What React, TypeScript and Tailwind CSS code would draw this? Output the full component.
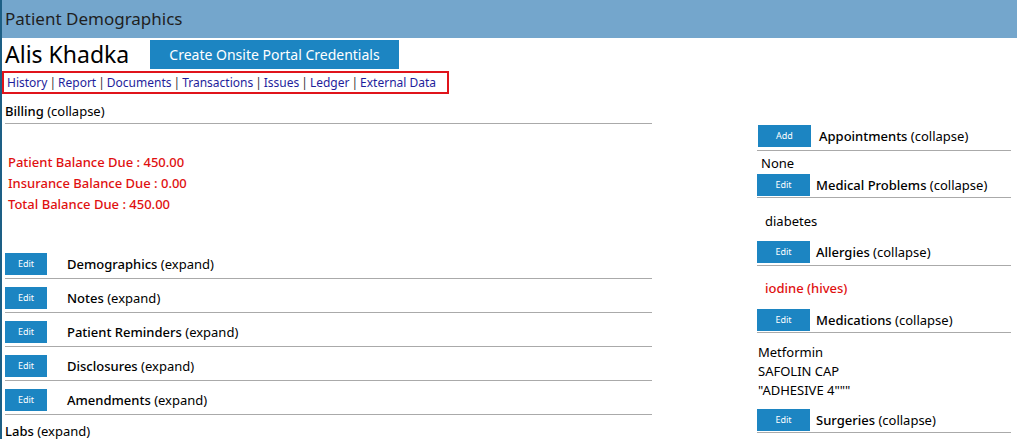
import React from 'react'

const font = "font-['Noto_Sans','Open_Sans',sans-serif]"

const EditBtn = ({ label = 'Edit', w = 'w-[42px]' }: { label?: string; w?: string }) => (
  <div className={`${w} h-[22px] bg-[#1c85c2] text-white text-[9px] flex items-center justify-center shrink-0`}>
    {label}
  </div>
)

const Title = ({ name, state }: { name: string; state: string }) => (
  <span className="text-[13px] text-black leading-[18px] whitespace-nowrap">
    <span className="font-medium">{name}</span> <span className="font-normal">({state})</span>
  </span>
)

const links = ['History', 'Report', 'Documents', 'Transactions', 'Issues', 'Ledger', 'External Data']

const leftRows = ['Demographics', 'Notes', 'Patient Reminders', 'Disclosures', 'Amendments']

export default function App() {
  return (
    <div className={`${font} w-[1017px] h-[439px] overflow-hidden bg-white border-l-2 border-[#1d5f85] text-[#222]`}>
      <div className="h-[38px] bg-[#74a6cc] flex items-center pl-[3px] text-[17px] text-[#1f1f1f]">
        Patient Demographics
      </div>

      <div className="flex items-center h-[33px] pl-[3px]">
        <span className="text-[23px] text-black leading-none w-[145px]">Alis Khadka</span>
        <div className="h-[29px] w-[249px] bg-[#1c85c2] text-white text-[14px] flex items-center justify-center">
          Create Onsite Portal Credentials
        </div>
      </div>

      <div className="w-[447px] h-[23px] border-2 border-[#e0141b] flex items-center pl-[3px] text-[12px] text-[#1e1e9c] whitespace-nowrap">
        {links.map((l, i) => (
          <React.Fragment key={l}>
            {i > 0 && <span className="text-[#333] px-[2px]">|</span>}
            <span>{l}</span>
          </React.Fragment>
        ))}
      </div>

      <div className="flex">
        <div className="w-[650px] pl-[3px]">
          <div className="pt-[8px] pb-[3px] border-b border-[#aaa] text-[13px] leading-[18px] text-black">
            <span className="font-medium">Billing</span> (collapse)
          </div>
          <div className="mt-[28px] pl-[3px] text-[13px] leading-[21px] text-[#e01010] font-medium">
            <div>Patient Balance Due : 450.00</div>
            <div>Insurance Balance Due : 0.00</div>
            <div>Total Balance Due : 450.00</div>
          </div>
          <div className="mt-[30px]">
            {leftRows.map((r) => (
              <div key={r} className="flex items-center gap-[20px] pt-[8px] pb-[3px] border-b border-[#aaa]">
                <EditBtn />
                <Title name={r} state="expand" />
              </div>
            ))}
          </div>
          <div className="mt-[7px] text-[13px] leading-[18px] text-black">
            <span className="font-medium">Labs</span> (expand)
          </div>
        </div>

        <div className="ml-[105px] w-[254px] text-[13px]">
          <div className="mt-[31px] flex items-center gap-[8px] pb-[3px] border-b border-[#aaa]">
            <div className="ml-[1px]">
              <EditBtn label="Add" w="w-[53px]" />
            </div>
            <Title name="Appointments" state="collapse" />
          </div>
          <div className="mt-[3px] pl-[4px] leading-[18px] text-black">None</div>
          <div className="mt-[2px] flex items-center gap-[6px] pb-[1px] border-b border-[#aaa]">
            <EditBtn w="w-[53px]" />
            <Title name="Medical Problems" state="collapse" />
          </div>
          <div className="mt-[14px] pl-[8px] leading-[18px] text-black">diabetes</div>
          <div className="mt-[11px] flex items-center gap-[6px] pb-[2px] border-b border-[#aaa]">
            <EditBtn w="w-[53px]" />
            <Title name="Allergies" state="collapse" />
          </div>
          <div className="mt-[13px] pl-[8px] leading-[18px] text-[#e01010] font-medium">iodine (hives)</div>
          <div className="mt-[12px] flex items-center gap-[6px] pb-[1px] border-b border-[#aaa]">
            <EditBtn w="w-[53px]" />
            <Title name="Medications" state="collapse" />
          </div>
          <div className="mt-[10px] pl-[1px] leading-[19px] text-black">
            <div>Metformin</div>
            <div>SAFOLIN CAP</div>
            <div>"ADHESIVE 4"""</div>
          </div>
          <div className="mt-[9px] flex items-center gap-[6px] pb-[1px] border-b border-[#aaa]">
            <EditBtn w="w-[53px]" />
            <Title name="Surgeries" state="collapse" />
          </div>
        </div>
      </div>
    </div>
  )
}
